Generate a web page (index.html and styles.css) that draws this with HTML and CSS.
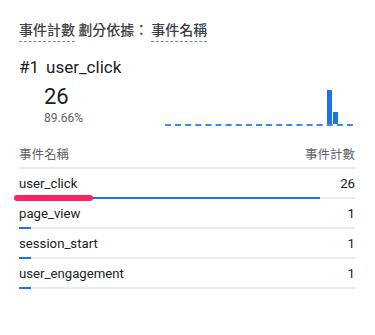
FILE: index.html
```html
<!DOCTYPE html>
<html lang="zh-Hant">
<head>
  <meta charset="UTF-8" />
  <meta name="viewport" content="width=device-width, initial-scale=1.0" />
  <title>事件計數</title>
  <link rel="stylesheet" href="styles.css">
</head>
<body>
  <div class="card">
    <div class="title">
      <span class="dotted">事件計數</span> 劃分依據： <span class="dotted">事件名稱</span>
    </div>

    <div class="top-name"><span class="rank">#1</span>user_click</div>
    <div class="summary">
      <div class="stats">
        <div class="big">26</div>
        <div class="pct">89.66%</div>
      </div>
      <div class="spark">
        <div class="bar tall"></div>
        <div class="bar short"></div>
      </div>
    </div>

    <div class="thead">
      <span>事件名稱</span>
      <span>事件計數</span>
    </div>

    <!-- rows -->
    <div class="row">
      <div class="cells"><span>user_click</span><span>26</span></div>
      <div class="track"><div class="fill" style="width: 89.66%"></div></div>
      <div class="marker"></div>
    </div>
    <div class="row">
      <div class="cells"><span>page_view</span><span>1</span></div>
      <div class="track"><div class="fill" style="width: 3.45%"></div></div>
    </div>
    <div class="row">
      <div class="cells"><span>session_start</span><span>1</span></div>
      <div class="track"><div class="fill" style="width: 3.45%"></div></div>
    </div>
    <div class="row">
      <div class="cells"><span>user_engagement</span><span>1</span></div>
      <div class="track"><div class="fill" style="width: 3.45%"></div></div>
    </div>
  </div>
</body>
</html>
```

FILE: styles.css
```css
body {
  margin: 0;
  background: #fff;
  font-family: Roboto, "Noto Sans CJK TC", sans-serif;
  color: #202124;
}
.card {
  width: 336px;
  padding: 18px 0 0 19px;
}
.title {
  font-family: "Noto Sans CJK TC", sans-serif;
  font-size: 14px;
  font-weight: 500;
  line-height: 22px;
  color: #3c4043;
  height: 30px;
}
.dotted {
  border-bottom: 1px dashed #80868b;
  padding-bottom: 2px;
}
.top-name {
  margin-top: 8px;
  font-size: 17px;
  line-height: 22px;
}
.rank {
  margin-right: 7px;
}
.summary {
  display: flex;
  align-items: flex-end;
  margin-top: 6px;
}
.stats {
  padding-left: 25px;
  width: 121px;
}
.big {
  font-size: 22px;
  line-height: 26px;
}
.pct {
  font-size: 12px;
  line-height: 16px;
  color: #5f6368;
}
.spark {
  flex: 1;
  height: 36px;
  display: flex;
  align-items: flex-end;
  padding-left: 162px;
  margin-right: 2px;
  border-bottom: 2px dashed #4285f4;
}
.bar {
  width: 5px;
  background: #1a73e8;
  margin-right: 1px;
}
.tall { height: 34px; }
.short { height: 12px; }
.thead {
  display: flex;
  justify-content: space-between;
  margin-top: 18px;
  font-family: "Noto Sans CJK TC", sans-serif;
  font-size: 12.5px;
  line-height: 20px;
  color: #5f6368;
  padding-bottom: 3px;
  border-bottom: 2px solid #e8eaed;
}
.row {
  position: relative;
  padding-top: 5px;
}
.cells {
  display: flex;
  justify-content: space-between;
  font-size: 13.2px;
  line-height: 19px;
}
.track {
  margin-top: 4px;
  height: 2px;
  background: #e8eaed;
}
.fill {
  height: 2px;
  background: #1a73e8;
}
.marker {
  position: absolute;
  left: -5px;
  bottom: -2px;
  width: 79px;
  height: 6px;
  border-radius: 3px;
  background: #f8245f;
}
```
